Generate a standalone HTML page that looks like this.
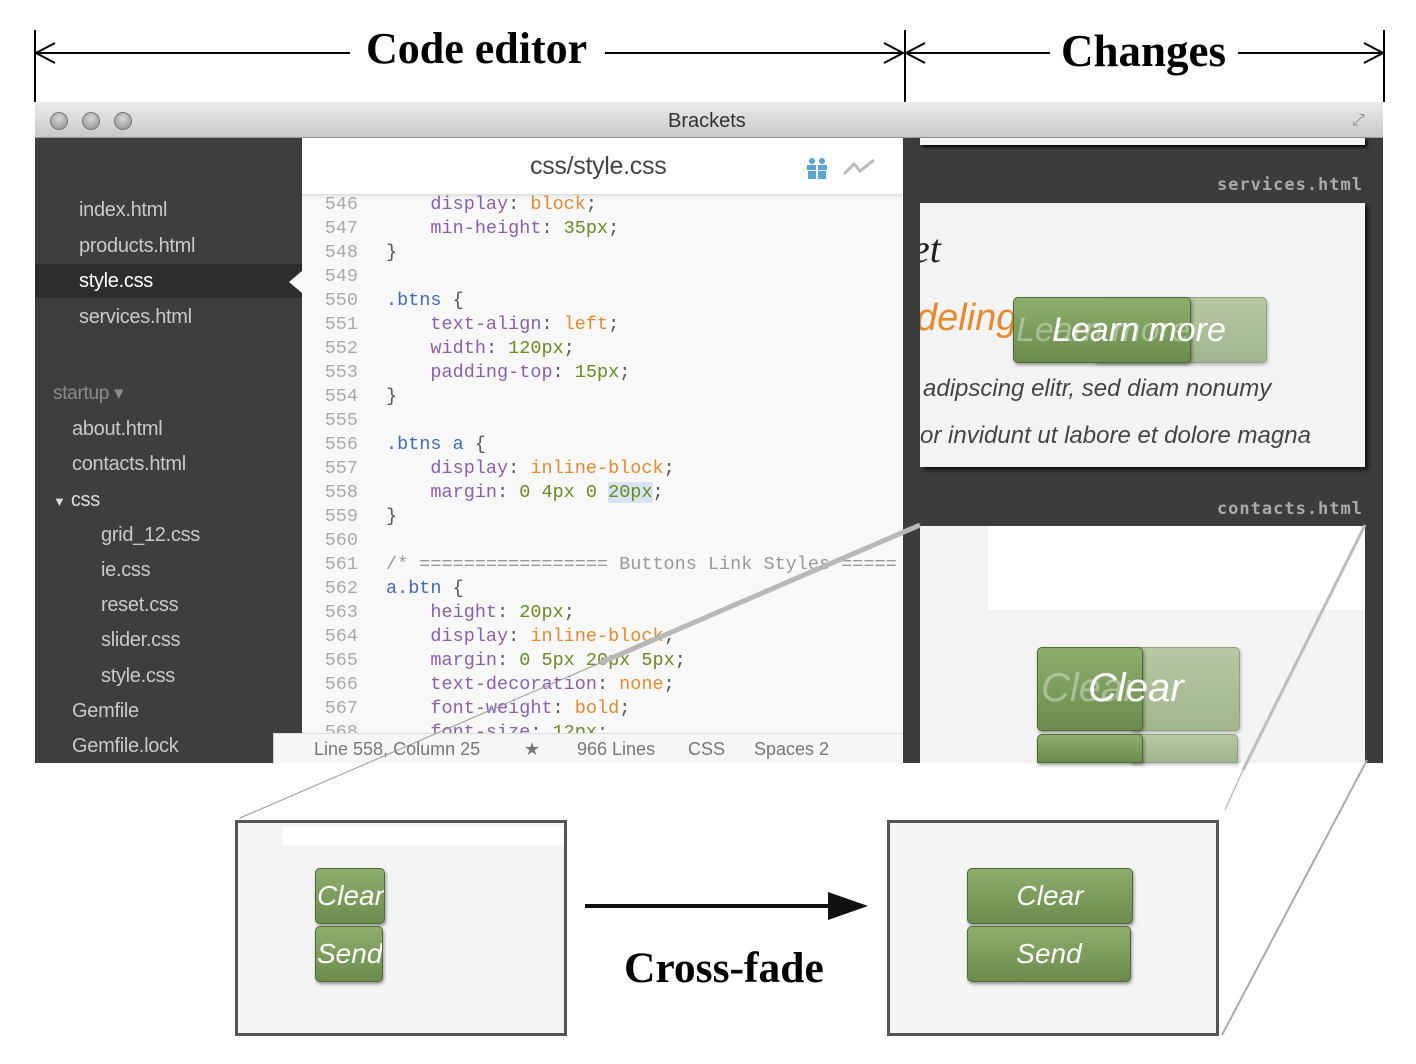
<!DOCTYPE html>
<html><head><meta charset="utf-8"><style>
*{margin:0;padding:0;box-sizing:border-box}
body{width:1416px;height:1064px;background:#fff;position:relative;overflow:hidden;font-family:"Liberation Sans",sans-serif}
.a{position:absolute}
.hd{font-family:"Liberation Serif",serif;font-weight:bold;font-size:44px;color:#000;white-space:nowrap}
.side div{position:absolute;font-size:20px;color:#c9c9c9;letter-spacing:-0.3px;white-space:nowrap}
.code{font-family:"Liberation Mono",monospace;font-size:18.5px;white-space:pre;color:#555}
.ln{position:absolute;left:318px;width:40px;text-align:right;color:#aaa}
.cl{position:absolute;left:386px}
.p{color:#8b5fae}.v{color:#e58a2e}.n{color:#6b8a22}.s{color:#3f6cb8}.c{color:#999}
.btn{position:absolute;border-radius:5px;border:1px solid #4d6a37;background:linear-gradient(#8eae6d,#6b8c4c);color:#fff;font-style:italic;font-size:28px;box-shadow:1px 2px 3px rgba(0,0,0,.4);overflow:hidden;white-space:nowrap;text-align:center}
.lbl{position:absolute;right:53px;font-family:"DejaVu Sans Mono",monospace;font-weight:bold;font-size:17px;letter-spacing:1px;color:#aaa}
.st{position:absolute;top:739px;font-size:18px;color:#777;white-space:nowrap}
</style></head><body>
<svg class="a" style="left:0;top:0" width="1416" height="110">
<g stroke="#000" stroke-width="2" fill="none">
<line x1="35" y1="30" x2="35" y2="102"/><line x1="905" y1="30" x2="905" y2="102"/><line x1="1384" y1="30" x2="1384" y2="102"/>
<line x1="36" y1="53" x2="350" y2="53"/><line x1="605" y1="53" x2="903" y2="53"/>
<line x1="906" y1="53" x2="1050" y2="53"/><line x1="1238" y1="53" x2="1383" y2="53"/>
<polyline points="55,43 36,53 55,63"/><polyline points="884,43 903,53 884,63"/>
<polyline points="925,43 906,53 925,63"/><polyline points="1364,43 1383,53 1364,63"/>
</g></svg>
<div class="a hd" style="left:366px;top:23px">Code editor</div>
<div class="a hd" style="left:1061px;top:25px;font-size:45px">Changes</div>

<div class="a" style="left:35px;top:102px;width:1348px;height:36px;background:linear-gradient(#ececec,#c8c8c8);border-bottom:1px solid #999"></div>
<div class="a" style="left:50px;top:112px;width:18px;height:18px;border-radius:50%;background:radial-gradient(circle at 50% 35%,#d8d8d8,#8a8a8a);border:1px solid #777"></div>
<div class="a" style="left:82px;top:112px;width:18px;height:18px;border-radius:50%;background:radial-gradient(circle at 50% 35%,#d8d8d8,#8a8a8a);border:1px solid #777"></div>
<div class="a" style="left:114px;top:112px;width:18px;height:18px;border-radius:50%;background:radial-gradient(circle at 50% 35%,#d8d8d8,#8a8a8a);border:1px solid #777"></div>
<div class="a" style="left:668px;top:110px;font-size:20px;color:#333">Brackets</div>
<div class="a" style="left:1352px;top:112px;font-size:16px;color:#888">⤢</div>

<div class="a side" style="left:35px;top:138px;width:267px;height:625px;background:#3d3f3f">
<div style="left:0;top:126px;width:267px;height:34px;background:#2c2e2e"></div>
<div style="left:44px;top:61px">index.html</div>
<div style="left:44px;top:97px">products.html</div>
<div style="left:44px;top:132px;color:#fff">style.css</div>
<div style="left:44px;top:168px">services.html</div>
<div style="left:18px;top:244px;color:#8a8a8a;font-size:19px">startup ▾</div>
<div style="left:37px;top:280px">about.html</div>
<div style="left:37px;top:315px">contacts.html</div>
<div style="left:18px;top:351px;color:#ddd"><span style="font-size:13px">▼</span> css</div>
<div style="left:66px;top:386px">grid_12.css</div>
<div style="left:66px;top:421px">ie.css</div>
<div style="left:66px;top:456px">reset.css</div>
<div style="left:66px;top:491px">slider.css</div>
<div style="left:66px;top:527px">style.css</div>
<div style="left:37px;top:562px">Gemfile</div>
<div style="left:37px;top:597px">Gemfile.lock</div>
</div>
<div class="a" style="left:289px;top:271px;width:0;height:0;border-top:11px solid transparent;border-bottom:11px solid transparent;border-right:13px solid #fafafa"></div>

<div class="a" style="left:302px;top:138px;width:601px;height:625px;background:#f8f8f8;overflow:hidden">
<div class="a code" style="left:-302px;top:-138px;width:903px">
<div class="ln" style="top:194px">546</div><div class="cl" style="top:194px">    <span class="p">display</span>: <span class="v">block</span>;</div>
<div class="ln" style="top:218px">547</div><div class="cl" style="top:218px">    <span class="p">min-height</span>: <span class="n">35px</span>;</div>
<div class="ln" style="top:242px">548</div><div class="cl" style="top:242px">}</div>
<div class="ln" style="top:266px">549</div>
<div class="ln" style="top:290px">550</div><div class="cl" style="top:290px"><span class="s">.btns</span> {</div>
<div class="ln" style="top:314px">551</div><div class="cl" style="top:314px">    <span class="p">text-align</span>: <span class="v">left</span>;</div>
<div class="ln" style="top:338px">552</div><div class="cl" style="top:338px">    <span class="p">width</span>: <span class="n">120px</span>;</div>
<div class="ln" style="top:362px">553</div><div class="cl" style="top:362px">    <span class="p">padding-top</span>: <span class="n">15px</span>;</div>
<div class="ln" style="top:386px">554</div><div class="cl" style="top:386px">}</div>
<div class="ln" style="top:410px">555</div>
<div class="ln" style="top:434px">556</div><div class="cl" style="top:434px"><span class="s">.btns a</span> {</div>
<div class="ln" style="top:458px">557</div><div class="cl" style="top:458px">    <span class="p">display</span>: <span class="v">inline-block</span>;</div>
<div class="ln" style="top:482px">558</div><div class="cl" style="top:482px">    <span class="p">margin</span>: <span class="n">0 4px 0 <span style="background:#d6e4f0">20px</span></span>;</div>
<div class="ln" style="top:506px">559</div><div class="cl" style="top:506px">}</div>
<div class="ln" style="top:530px">560</div>
<div class="ln" style="top:554px">561</div><div class="cl c" style="top:554px">/* ================= Buttons Link Styles =====</div>
<div class="ln" style="top:578px">562</div><div class="cl" style="top:578px"><span class="s">a.btn</span> {</div>
<div class="ln" style="top:602px">563</div><div class="cl" style="top:602px">    <span class="p">height</span>: <span class="n">20px</span>;</div>
<div class="ln" style="top:626px">564</div><div class="cl" style="top:626px">    <span class="p">display</span>: <span class="v">inline-block</span>;</div>
<div class="ln" style="top:650px">565</div><div class="cl" style="top:650px">    <span class="p">margin</span>: <span class="n">0 5px 20px 5px</span>;</div>
<div class="ln" style="top:674px">566</div><div class="cl" style="top:674px">    <span class="p">text-decoration</span>: <span class="v">none</span>;</div>
<div class="ln" style="top:698px">567</div><div class="cl" style="top:698px">    <span class="p">font-weight</span>: <span class="v">bold</span>;</div>
<div class="ln" style="top:722px">568</div><div class="cl" style="top:722px">    <span class="p">font-size</span>: <span class="n">12px</span>;</div>
</div>
</div>
<div class="a" style="left:302px;top:138px;width:601px;height:57px;background:#fff;border-bottom:1px solid #ddd;box-shadow:0 2px 3px rgba(0,0,0,.08)"></div>
<div class="a" style="left:530px;top:152px;font-size:25px;color:#444;letter-spacing:-0.3px">css/style.css</div>
<svg class="a" style="left:806px;top:157px" width="24" height="24"><g fill="#5aa3d6"><rect x="1" y="8" width="9" height="5"/><rect x="12" y="8" width="9" height="5"/><rect x="2" y="14" width="8" height="8"/><rect x="12" y="14" width="8" height="8"/><circle cx="6" cy="4" r="3"/><circle cx="16" cy="4" r="3"/></g></svg>
<svg class="a" style="left:842px;top:156px" width="34" height="24"><polyline points="2,18 12,8 18,15 32,4" stroke="#bbb" stroke-width="3" fill="none"/></svg>
<div class="a" style="left:273px;top:733px;width:630px;height:30px;background:#f6f6f6;border-top:1px solid #ddd;border-left:1px solid #ccc"></div>
<div class="st" style="left:314px">Line 558, Column 25</div>
<div class="st" style="left:524px">★</div>
<div class="st" style="left:577px">966 Lines</div>
<div class="st" style="left:688px">CSS</div>
<div class="st" style="left:754px">Spaces 2</div>

<div class="a" style="left:903px;top:138px;width:480px;height:625px;background:#3b3d3d"></div>
<div class="a" style="left:920px;top:138px;width:445px;height:7px;background:#f4f4f4;box-shadow:2px 2px 3px #000"></div>
<div class="lbl" style="top:175px">services.html</div>
<div class="a" style="left:920px;top:203px;width:445px;height:264px;background:#f3f3f3;overflow:hidden;box-shadow:3px 3px 4px #111">
<div class="a" style="left:-8px;top:22px;font-family:'Liberation Serif',serif;font-style:italic;font-size:40px;color:#222">et</div>
<div class="a" style="left:-4px;top:94px;font-style:italic;font-size:38px;color:#e68a2e">deling</div>
<div class="a" style="left:3px;top:172px;font-style:italic;font-size:24px;color:#444;white-space:nowrap">adipscing elitr, sed diam nonumy</div>
<div class="a" style="left:0;top:219px;font-style:italic;font-size:24px;color:#444;white-space:nowrap">or invidunt ut labore et dolore magna</div>
</div>
<div class="btn" style="left:1093px;top:297px;width:174px;height:66px;opacity:.6"></div>
<div class="btn" style="left:1013px;top:297px;width:178px;height:66px"></div>
<div class="a" style="left:1016px;top:311px;font-style:italic;font-size:34px;color:rgba(255,255,255,.35);white-space:nowrap">Learn more</div>
<div class="a" style="left:1052px;top:311px;font-style:italic;font-size:34px;color:#fff;white-space:nowrap">Learn more</div>
<div class="lbl" style="top:499px">contacts.html</div>
<div class="a" style="left:920px;top:526px;width:445px;height:237px;background:#f3f3f3;overflow:hidden">
<div class="a" style="left:68px;top:0;width:377px;height:84px;background:#fff"></div>
</div>
<div class="btn" style="left:1130px;top:647px;width:110px;height:84px;opacity:.6"></div>
<div class="btn" style="left:1037px;top:647px;width:106px;height:84px"></div>
<div class="btn" style="left:1130px;top:734px;width:108px;height:29px;opacity:.6;border-radius:5px 5px 0 0"></div>
<div class="btn" style="left:1037px;top:734px;width:106px;height:29px;border-radius:5px 5px 0 0"></div>
<div class="a" style="left:1041px;top:666px;font-style:italic;font-size:40px;color:rgba(255,255,255,.35)">Clear</div>
<div class="a" style="left:1088px;top:666px;font-style:italic;font-size:40px;color:#fff">Clear</div>

<svg class="a" style="left:0;top:0" width="1416" height="1064">
<line x1="920" y1="525" x2="600" y2="663" stroke="#b8b8b8" stroke-width="5"/>
<line x1="600" y1="663" x2="240" y2="818" stroke="#999" stroke-width="1"/>
<line x1="1365" y1="525" x2="1243" y2="770" stroke="#bbb" stroke-width="3"/>
<line x1="1243" y1="770" x2="1225" y2="810" stroke="#aaa" stroke-width="1"/>
<line x1="1367" y1="760" x2="1222" y2="1035" stroke="#aaa" stroke-width="2"/>
<line x1="585" y1="906" x2="840" y2="906" stroke="#111" stroke-width="4"/>
<polygon points="828,892 868,906 828,920" fill="#111"/>
</svg>

<div class="a" style="left:235px;top:820px;width:332px;height:216px;border:3px solid #555;background:#f4f4f4">
<div class="a" style="left:44px;top:4px;width:282px;height:18px;background:#fff"></div>
</div>
<div class="btn" style="left:315px;top:868px;width:70px;height:56px;line-height:54px;text-align:left;padding-left:1px">Clear</div>
<div class="btn" style="left:315px;top:926px;width:68px;height:56px;line-height:54px;text-align:left;padding-left:1px">Send</div>
<div class="a" style="left:887px;top:820px;width:332px;height:216px;border:3px solid #555;background:#f4f4f4"></div>
<div class="btn" style="left:967px;top:868px;width:166px;height:56px;line-height:54px">Clear</div>
<div class="btn" style="left:967px;top:926px;width:164px;height:56px;line-height:54px">Send</div>
<div class="a hd" style="left:624px;top:943px;font-size:43.5px">Cross-fade</div>
</body></html>
